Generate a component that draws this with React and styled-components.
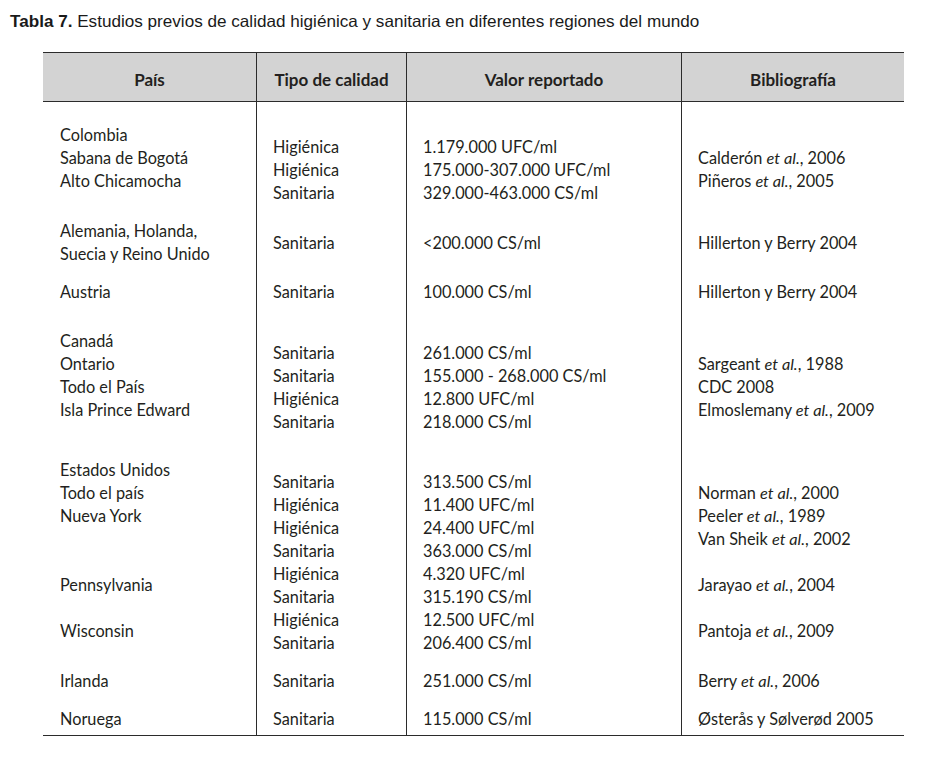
import React from "react";
import styled, { createGlobalStyle } from "styled-components";

const Global = createGlobalStyle`
  html, body { margin: 0; padding: 0; background: #ffffff; }
  body { font-family: "Lato", "Noto Sans", sans-serif; color: #231f20; }
`;

const Page = styled.div`
  padding: 12px 0 0 10px;
`;

const Caption = styled.div`
  font-family: "Liberation Sans", Arial, sans-serif;
  font-size: 17.12px;
  line-height: 20px;
  color: #1a1a1a;
  b { font-weight: 700; }
`;

const Table = styled.div`
  margin: 20px 0 0 33px;
  width: 861px;
  border-bottom: 1px solid #2b2b2b;
  font-family: "Lato", "Noto Sans", sans-serif;
  font-size: 16.3px;
  line-height: 23px;
`;

const Grid = styled.div`
  display: grid;
  grid-template-columns: 213px 150px 275px 223px;
`;

const HeaderRow = styled(Grid)`
  height: 50px;
  box-sizing: border-box;
  background: #d3d3d3;
  border-top: 1px solid #2b2b2b;
  border-bottom: 1px solid #2b2b2b;
`;

const HeaderCell = styled.div`
  display: flex;
  align-items: center;
  justify-content: center;
  padding-top: 4px;
  font-size: 17px;
  font-weight: 700;
  color: #231f20;
  & + & { border-left: 1px solid #2b2b2b; }
`;

const Row = styled(Grid)`
  height: ${(p) => p.$h}px;
  grid-template-rows: ${(p) => p.$h}px;
`;

const Cell = styled.div`
  display: flex;
  flex-direction: column;
  justify-content: center;
  box-sizing: border-box;
  min-height: 0;
  padding-left: ${(p) => (p.$first ? 17 : 16)}px;
  padding-top: ${(p) => p.$top || 0}px;
  & + & { border-left: 1px solid #2b2b2b; }
`;

const Stack = styled.div`
  margin-bottom: ${(p) => (p.$lift || 0) * 2}px;
  white-space: nowrap;
`;

const Line = styled.div``;

const groups = [
  {
    h: 84, top: 25, lift: 12,
    pais: ["Colombia", "Sabana de Bogotá", "Alto Chicamocha"],
    tipo: ["Higiénica", "Higiénica", "Sanitaria"],
    valor: ["1.179.000 UFC/ml", "175.000-307.000 UFC/ml", "329.000-463.000 CS/ml"],
    bib: [["Calderón", " 2006"], ["Piñeros", " 2005"]],
  },
  {
    h: 62,
    pais: ["Alemania, Holanda,", "Suecia y Reino Unido"],
    tipo: ["Sanitaria"],
    valor: ["<200.000 CS/ml"],
    bib: ["Hillerton y Berry 2004"],
  },
  {
    h: 36,
    pais: ["Austria"],
    tipo: ["Sanitaria"],
    valor: ["100.000 CS/ml"],
    bib: ["Hillerton y Berry 2004"],
  },
  {
    h: 155, lift: 12,
    pais: ["Canadá", "Ontario", "Todo el País", "Isla Prince Edward"],
    tipo: ["Sanitaria", "Sanitaria", "Higiénica", "Sanitaria"],
    valor: ["261.000 CS/ml", "155.000 - 268.000 CS/ml", "12.800 UFC/ml", "218.000 CS/ml"],
    bib: [["Sargeant", " 1988"], "CDC 2008", ["Elmoslemany", " 2009"]],
  },
  {
    h: 103, lift: 23.5,
    pais: ["Estados Unidos", "Todo el país", "Nueva York"],
    tipo: ["Sanitaria", "Higiénica", "Higiénica", "Sanitaria"],
    valor: ["313.500 CS/ml", "11.400 UFC/ml", "24.400 UFC/ml", "363.000 CS/ml"],
    bib: [["Norman", " 2000"], ["Peeler", " 1989"], ["Van Sheik", " 2002"]],
  },
  {
    h: 35,
    pais: ["Pennsylvania"],
    tipo: ["Higiénica", "Sanitaria"],
    valor: ["4.320 UFC/ml", "315.190 CS/ml"],
    bib: [["Jarayao", " 2004"]],
  },
  {
    h: 57,
    pais: ["Wisconsin"],
    tipo: ["Higiénica", "Sanitaria"],
    valor: ["12.500 UFC/ml", "206.400 CS/ml"],
    bib: [["Pantoja", " 2009"]],
  },
  {
    h: 42,
    pais: ["Irlanda"],
    tipo: ["Sanitaria"],
    valor: ["251.000 CS/ml"],
    bib: [["Berry", " 2006"]],
  },
  {
    h: 34,
    pais: ["Noruega"],
    tipo: ["Sanitaria"],
    valor: ["115.000 CS/ml"],
    bib: ["Østerås y Sølverød 2005"],
  },
];

const Ref = ({ item }) =>
  Array.isArray(item) ? (
    <Line>
      {item[0]} <i>et al.</i>,{item[1]}
    </Line>
  ) : (
    <Line>{item}</Line>
  );

export default function App() {
  return (
    <>
      <Global />
      <Page>
        <Caption>
          <b>Tabla 7.</b> Estudios previos de calidad higiénica y sanitaria en diferentes regiones del mundo
        </Caption>
        <Table>
          <HeaderRow>
            <HeaderCell>País</HeaderCell>
            <HeaderCell>Tipo de calidad</HeaderCell>
            <HeaderCell>Valor reportado</HeaderCell>
            <HeaderCell>Bibliografía</HeaderCell>
          </HeaderRow>
          {groups.map((g, i) => {
            const h = g.h + (g.top || 0);
            return (
              <Row key={i} $h={h}>
                <Cell $first $top={g.top}>
                  <Stack $lift={g.lift}>
                    {g.pais.map((t, j) => (
                      <Line key={j}>{t}</Line>
                    ))}
                  </Stack>
                </Cell>
                <Cell $top={g.top}>
                  <Stack>
                    {g.tipo.map((t, j) => (
                      <Line key={j}>{t}</Line>
                    ))}
                  </Stack>
                </Cell>
                <Cell $top={g.top}>
                  <Stack>
                    {g.valor.map((t, j) => (
                      <Line key={j}>{t}</Line>
                    ))}
                  </Stack>
                </Cell>
                <Cell $top={g.top}>
                  <Stack>
                    {g.bib.map((t, j) => (
                      <Ref key={j} item={t} />
                    ))}
                  </Stack>
                </Cell>
              </Row>
            );
          })}
        </Table>
      </Page>
    </>
  );
}
